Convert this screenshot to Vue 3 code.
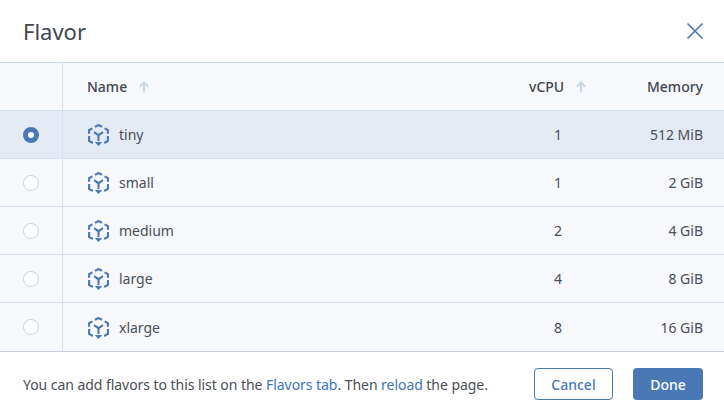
<script setup>
const flavors = [
  { name: 'tiny', vcpu: 1, memory: '512 MiB', selected: true },
  { name: 'small', vcpu: 1, memory: '2 GiB' },
  { name: 'medium', vcpu: 2, memory: '4 GiB' },
  { name: 'large', vcpu: 4, memory: '8 GiB' },
  { name: 'xlarge', vcpu: 8, memory: '16 GiB' },
]
</script>

<template>
  <div class="dialog">
    <header class="head">
      <h1>Flavor</h1>
      <button class="close" aria-label="Close">
        <svg width="18" height="18" viewBox="0 0 18 18">
          <path d="M1.5 1.5 16.5 16.5M16.5 1.5 1.5 16.5" stroke="#4a78b4" stroke-width="1.6" fill="none" />
        </svg>
      </button>
    </header>

    <div class="table">
      <div class="row header">
        <div class="cell check"></div>
        <div class="cell name">
          Name
          <svg class="sort" width="10" height="12" viewBox="0 0 10 12">
            <path d="M5 11.5V1.5M1 5.5 5 1.5 9 5.5" stroke="#c9d6ea" stroke-width="2" fill="none" />
          </svg>
        </div>
        <div class="cell vcpu">
          vCPU
          <svg class="sort" width="10" height="12" viewBox="0 0 10 12">
            <path d="M5 11.5V1.5M1 5.5 5 1.5 9 5.5" stroke="#c9d6ea" stroke-width="2" fill="none" />
          </svg>
        </div>
        <div class="cell memory">Memory</div>
      </div>

      <div v-for="f in flavors" :key="f.name" class="row" :class="{ selected: f.selected }">
        <div class="cell check">
          <span class="radio" :class="{ on: f.selected }"></span>
        </div>
        <div class="cell name">
          <svg class="cube" width="21" height="23" viewBox="0 0 21 23" fill="none" stroke="#4a78b4" stroke-width="2.1">
            <path d="M7 2.8 10.5 1.1 14 2.8" />
            <path d="M1.1 9.8V6.2L4.4 4.4" />
            <path d="M19.9 9.8V6.2L16.6 4.4" />
            <path d="M1.1 12V16.9L4.8 19" />
            <path d="M19.9 12V16.9L16.2 19" />
            <path d="M6 8.2 10.5 11.2 15 8.2" />
            <path d="M10.5 11.2V17" />
            <path d="M6.8 18 10.5 22 14.2 18Z" fill="#4a78b4" stroke="none" />
          </svg>
          <span>{{ f.name }}</span>
        </div>
        <div class="cell vcpu-val">{{ f.vcpu }}</div>
        <div class="cell memory">{{ f.memory }}</div>
      </div>
    </div>

    <footer class="foot">
      <p>You can add flavors to this list on the <a href="#">Flavors tab</a>. Then <a href="#">reload</a> the page.</p>
      <div class="actions">
        <button class="btn outline">Cancel</button>
        <button class="btn primary">Done</button>
      </div>
    </footer>
  </div>
</template>

<style scoped>
.dialog {
  width: 724px;
  height: 413px;
  display: flex;
  flex-direction: column;
  background: #fff;
  font-family: "Noto Sans", "Open Sans", sans-serif;
  font-size: 14px;
  color: #4a4e57;
  overflow: hidden;
}

.head {
  height: 62px;
  display: flex;
  align-items: center;
  justify-content: space-between;
  padding: 0 20px 0 23px;
  border-bottom: 1px solid #c9d8ee;
  box-sizing: content-box;
}

.head h1 {
  margin: 0;
  font-size: 22px;
  font-weight: 400;
  color: #43464f;
}

.close {
  border: 0;
  background: none;
  padding: 0;
  display: flex;
}

.table {
  background: #f6f8fc;
}

.row {
  height: 48px;
  box-sizing: border-box;
  display: grid;
  grid-template-columns: 63px 1fr 100px 120px;
  border-bottom: 1px solid #d5e0f0;
}

.row.selected {
  background: #e4eaf4;
}

.row:last-child {
  border-bottom: 0;
}

.cell {
  display: flex;
  align-items: center;
}

.check {
  justify-content: center;
  border-right: 1px solid #d5e0f0;
}

.name {
  padding-left: 25px;
  gap: 10px;
}

.cube {
  margin-top: 2px;
}

.header .cell {
  font-weight: 500;
  color: #43464f;
}

.header .name {
  padding-left: 24px;
  gap: 12px;
}

.header .vcpu {
  gap: 12px;
  margin-left: 25px;
}

.vcpu-val {
  padding-left: 50px;
}

.memory {
  justify-content: flex-end;
  padding-right: 21px;
}

.radio {
  width: 16px;
  height: 16px;
  box-sizing: border-box;
  border: 1px solid #c9d6ea;
  border-radius: 50%;
  background: #fff;
}

.radio.on {
  border: 5px solid #4a78b4;
}

.foot {
  flex: 1;
  display: flex;
  align-items: center;
  justify-content: space-between;
  padding: 3px 21px 0 23px;
  border-top: 1px solid #c9d0e0;
}

.foot p {
  margin: 0;
  font-size: 14px;
  letter-spacing: -0.05px;
}

.foot a {
  color: #3f74b5;
  text-decoration: none;
}

.actions {
  display: flex;
  gap: 20px;
}

.btn {
  height: 32px;
  border-radius: 4px;
  font-family: inherit;
  font-size: 14px;
  font-weight: 500;
  padding: 0;
}

.outline {
  width: 79px;
  background: #fff;
  border: 1px solid #4a78b4;
  color: #4a78b4;
}

.primary {
  width: 70px;
  background: #4a78b4;
  border: 0;
  color: #fff;
}
</style>

<style>
body {
  margin: 0;
}
</style>
